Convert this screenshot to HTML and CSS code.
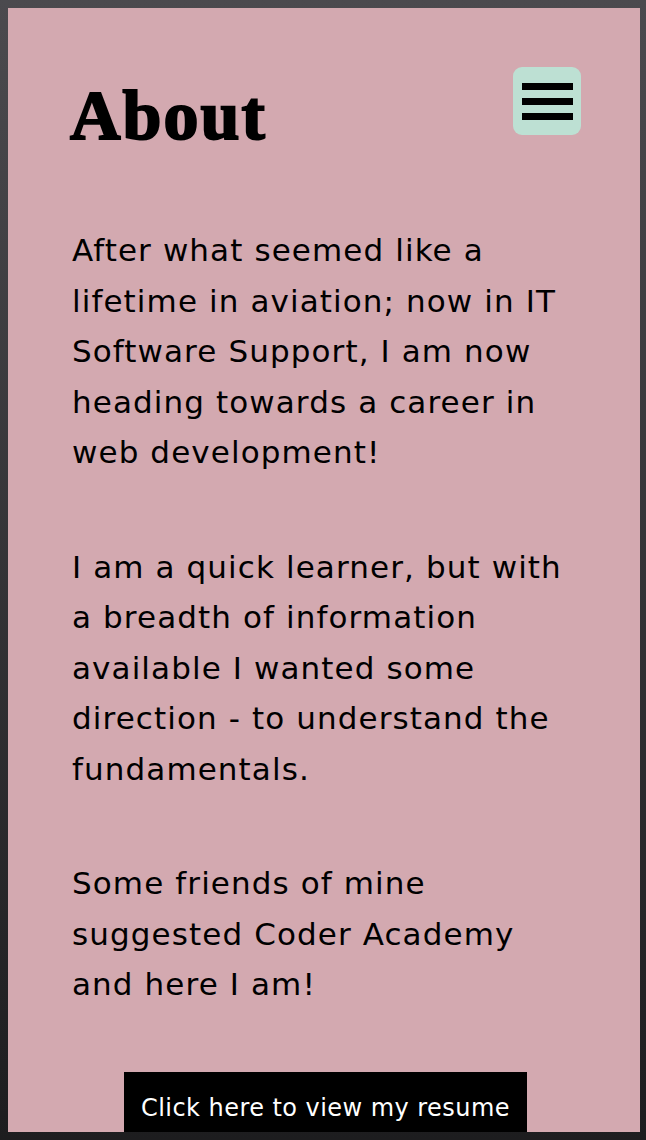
FILE: index.html
```html
<!DOCTYPE html>
<html lang="en">
<head>
<meta charset="utf-8">
<title>About</title>
<link rel="stylesheet" href="styles.css">
</head>
<body>
<main class="page">
  <header class="header">
    <h1 class="title">About</h1>
    <button class="menu" aria-label="Menu">
      <span class="bar"></span>
      <span class="bar"></span>
      <span class="bar"></span>
    </button>
  </header>
  <section class="about">
    <p>After what seemed like a lifetime in aviation; now in IT Software Support, I am now heading towards a career in web development!</p>
    <p>I am a quick learner, but with a breadth of information available I wanted some direction - to understand the fundamentals.</p>
    <p>Some friends of mine suggested Coder Academy and here I am!</p>
  </section>
  <div class="cta">
    <a class="resume" href="#">Click here to view my resume</a>
  </div>
</main>
</body>
</html>
```

FILE: styles.css
```css
html {
  height: 100%;
  background: linear-gradient(#4b4a4e, #1d1d1f);
}
body {
  margin: 8px 6px 8px 8px;
  height: 1124px;
  overflow: hidden;
}
.page {
  height: 1124px;
  overflow: hidden;
  background: #d3a9b0;
  box-shadow: 0 0 2px rgba(0, 0, 0, 0.7);
  padding: 59px 59px 0 62px;
  box-sizing: border-box;
  font-family: "DejaVu Sans", sans-serif;
  color: #000;
}
.header {
  display: flex;
  justify-content: space-between;
  align-items: flex-start;
}
.title {
  margin: 0;
  font-family: "Liberation Serif", serif;
  font-weight: 700;
  font-size: 70px;
  line-height: 98px;
  letter-spacing: 2px;
  -webkit-text-stroke: 2px #000;
}
.menu {
  width: 68px;
  height: 68px;
  border: none;
  border-radius: 9px;
  background: #bde0d3;
  display: flex;
  flex-direction: column;
  justify-content: center;
  align-items: center;
  gap: 8px;
  padding: 0;
}
.bar {
  display: block;
  width: 51px;
  height: 7px;
  background: #000;
}
.about {
  margin-top: 60px;
  padding: 0 9px 0 2px;
  font-size: 31px;
  line-height: 50.5px;
  letter-spacing: 1.1px;
}
.about p {
  margin: 0 0 64px;
}
.about p:last-child {
  margin-bottom: 62px;
}
.cta {
  display: flex;
  justify-content: center;
}
.resume {
  display: block;
  background: #000;
  color: #fff;
  text-decoration: none;
  font-size: 24px;
  letter-spacing: 0.45px;
  line-height: 28px;
  padding: 22px 17px;
}
```
